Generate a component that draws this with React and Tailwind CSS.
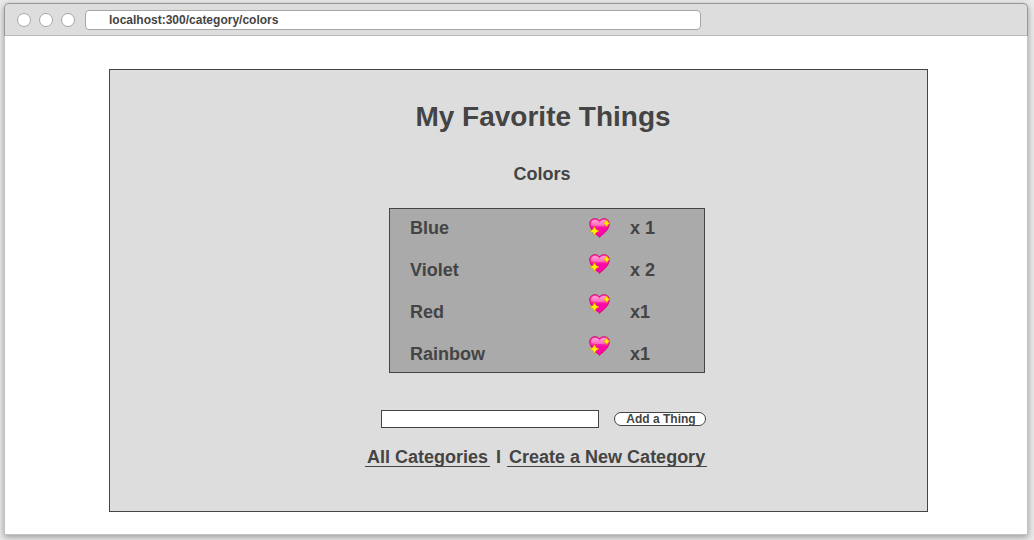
import React from "react";

const things = [
  { name: "Blue", count: "x 1", heart: "align-middle" },
  { name: "Violet", count: "x 2", heart: "align-top pt-[5px]" },
  { name: "Red", count: "x1", heart: "align-top pt-[3px]" },
  { name: "Rainbow", count: "x1", heart: "align-top pt-[3px]" },
];

function SparklingHeart() {
  return (
    <svg viewBox="0 0 42 40" className="block h-5 w-[21px]" role="img" aria-label="votes">
      <defs>
        <linearGradient id="heartFill" x1="0" y1="0" x2="0" y2="1">
          <stop offset="0" stopColor="#ff4fb4" />
          <stop offset="0.35" stopColor="#ff3fb0" />
          <stop offset="0.5" stopColor="#ff0aa8" />
          <stop offset="1" stopColor="#ff00b0" />
        </linearGradient>
        <linearGradient id="heartShine" x1="0" y1="0" x2="0" y2="1">
          <stop offset="0" stopColor="#ffa6da" />
          <stop offset="1" stopColor="#ff62bd" />
        </linearGradient>
      </defs>
      <path
        d="M21 38.5C17 34 2.5 25.5 1.5 12.5C1.2 5 6 1.5 11.5 1.5C16 1.5 19.5 3 21 6C22.5 3 26 1.5 30.5 1.5C36 1.5 40.8 5 40.5 12.5C39.5 25.5 25 34 21 38.5Z"
        fill="url(#heartFill)"
        stroke="#d8006c"
        strokeWidth="2"
      />
      <path
        d="M4.5 13C4 7 7 4 11.5 4C16 4 19.3 5.5 21 10C22.7 5.5 26 4 30.5 4C35 4 38 7 37.5 13C32 17 10 17 4.5 13Z"
        fill="url(#heartShine)"
      />
      <path
        d="M11 17L14.2 22.8L20.5 26L14.2 29.2L11 35L7.8 29.2L1 26L7.8 22.8Z"
        fill="#fff000"
        stroke="#d07000"
        strokeWidth="0.8"
      />
      <path
        d="M35.5 3.5L37.8 8L42 10.5L37.8 13L35.5 17.5L33.2 13L28 10.5L33.2 8Z"
        fill="#fff000"
        stroke="#e08000"
        strokeWidth="0.8"
      />
    </svg>
  );
}

function TitleBar() {
  return (
    <header className="flex h-[33px] items-center rounded-t-[5px] border border-[#979797] border-b-[#b8b8b8] bg-[#dddddd] pl-3">
      <div className="flex gap-2">
        <span className="size-3.5 rounded-full border border-[#a6a6a6] bg-white" />
        <span className="size-3.5 rounded-full border border-[#a6a6a6] bg-white" />
        <span className="size-3.5 rounded-full border border-[#a6a6a6] bg-white" />
      </div>
      <input
        type="text"
        aria-label="Address"
        defaultValue="localhost:300/category/colors"
        className="ml-2.5 h-5 w-[61%] rounded-[4px] border border-[#a6a6a6] bg-white pl-[23px] text-[12px] font-bold text-[#444444] outline-none"
      />
    </header>
  );
}

export default function App() {
  return (
    <div className="min-h-screen bg-[#e9e9e9] pt-[3px] pr-1.5 pb-[5px] pl-1 font-['Liberation_Sans',Arial,sans-serif] font-bold text-[#444444]">
      <div className="rounded-t-[5px] shadow-[0_2px_6px_rgba(0,0,0,0.35)]">
        <TitleBar />
        <div className="border-x border-b border-[#c4c4c4] bg-white pt-[33px] pr-[99px] pb-[22px] pl-[104px]">
          <main className="flex justify-center border border-[#444444] bg-[#dddddd] pt-[31px] pb-11 pl-[35px]">
            <div className="w-[342px]">
              <h1 className="pl-3.5 text-center text-[28px] leading-8">My Favorite Things</h1>
              <h2 className="mt-[31px] pl-3 text-center text-[18px] leading-5">Colors</h2>
              <div className="mt-6 ml-6 w-[316px] border border-[#444444] bg-[#aaaaaa]">
                <table className="-mt-0.5 -mb-[3px] w-full table-fixed border-collapse text-left text-[18px] leading-5">
                  <tbody>
                    {things.map((thing) => (
                      <tr key={thing.name} className="h-[42px]">
                        <th scope="row" className="w-[199px] pl-5 align-middle">
                          {thing.name}
                        </th>
                        <td className={`w-[41px] ${thing.heart}`}>
                          <SparklingHeart />
                        </td>
                        <td className="align-middle">{thing.count}</td>
                      </tr>
                    ))}
                  </tbody>
                </table>
              </div>
              <form
                className="mt-[37px] flex items-center pl-4"
                onSubmit={(event) => event.preventDefault()}
              >
                <input
                  type="text"
                  aria-label="New thing"
                  className="h-[18px] w-[218px] border border-[#444444] bg-white px-1 text-[12px] outline-none"
                />
                <button
                  type="submit"
                  className="ml-[15px] h-3.5 w-[92px] rounded-full border border-[#444444] bg-white pl-0.5 text-[12px] leading-3"
                >
                  Add a Thing
                </button>
              </form>
              <nav className="mt-5 flex gap-1.5 text-[18px] leading-[18px] whitespace-nowrap">
                <a href="#categories" className="border-b border-[#444444] px-0.5">
                  All Categories
                </a>
                <span>I</span>
                <a href="#new-category" className="border-b border-[#444444] px-0.5">
                  Create a New Category
                </a>
              </nav>
            </div>
          </main>
        </div>
      </div>
    </div>
  );
}
